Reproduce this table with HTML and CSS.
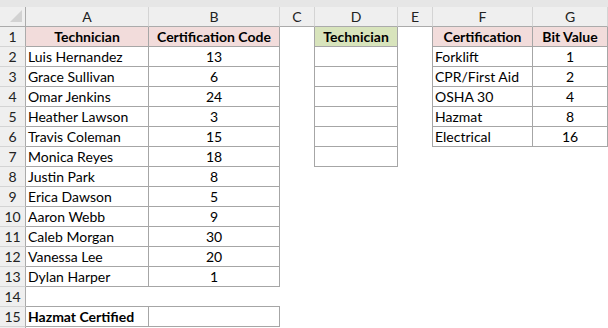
FILE: index.html
```html
<!DOCTYPE html>
<html>
<head>
<meta charset="utf-8">
<link rel="stylesheet" href="styles.css">
</head>
<body>
<div class="strip"></div>
<div class="sheet">
  <div class="corner"><svg width="12" height="12" viewBox="0 0 12 12"><polygon points="12,0 12,12 0,12" fill="#d2d2d2"/></svg></div>
  <div class="ch">A</div><div class="ch">B</div><div class="ch">C</div><div class="ch">D</div><div class="ch">E</div><div class="ch">F</div><div class="ch">G</div>

  <div class="rh">1</div>
  <div class="c x pink bold ctr">Technician</div><div class="c x pink bold ctr">Certification Code</div><div class="c br"></div><div class="c x green bold ctr">Technician</div><div class="c br"></div><div class="c x pink bold ctr">Certification</div><div class="c x pink bold ctr">Bit Value</div>

  <div class="rh">2</div>
  <div class="c x">Luis Hernandez</div><div class="c x ctr">13</div><div class="c br"></div><div class="c x"></div><div class="c br"></div><div class="c x">Forklift</div><div class="c x ctr">1</div>

  <div class="rh">3</div>
  <div class="c x">Grace Sullivan</div><div class="c x ctr">6</div><div class="c br"></div><div class="c x"></div><div class="c br"></div><div class="c x">CPR/First Aid</div><div class="c x ctr">2</div>

  <div class="rh">4</div>
  <div class="c x">Omar Jenkins</div><div class="c x ctr">24</div><div class="c br"></div><div class="c x"></div><div class="c br"></div><div class="c x">OSHA 30</div><div class="c x ctr">4</div>

  <div class="rh">5</div>
  <div class="c x">Heather Lawson</div><div class="c x ctr">3</div><div class="c br"></div><div class="c x"></div><div class="c br"></div><div class="c x">Hazmat</div><div class="c x ctr">8</div>

  <div class="rh">6</div>
  <div class="c x">Travis Coleman</div><div class="c x ctr">15</div><div class="c br"></div><div class="c x"></div><div class="c br"></div><div class="c x">Electrical</div><div class="c x ctr">16</div>

  <div class="rh">7</div>
  <div class="c x">Monica Reyes</div><div class="c x ctr">18</div><div class="c br"></div><div class="c x"></div><div class="c"></div><div class="c"></div><div class="c"></div>

  <div class="rh">8</div>
  <div class="c x">Justin Park</div><div class="c x ctr">8</div><div class="c"></div><div class="c"></div><div class="c"></div><div class="c"></div><div class="c"></div>

  <div class="rh">9</div>
  <div class="c x">Erica Dawson</div><div class="c x ctr">5</div><div class="c"></div><div class="c"></div><div class="c"></div><div class="c"></div><div class="c"></div>

  <div class="rh">10</div>
  <div class="c x">Aaron Webb</div><div class="c x ctr">9</div><div class="c"></div><div class="c"></div><div class="c"></div><div class="c"></div><div class="c"></div>

  <div class="rh">11</div>
  <div class="c x">Caleb Morgan</div><div class="c x ctr">30</div><div class="c"></div><div class="c"></div><div class="c"></div><div class="c"></div><div class="c"></div>

  <div class="rh">12</div>
  <div class="c x">Vanessa Lee</div><div class="c x ctr">20</div><div class="c"></div><div class="c"></div><div class="c"></div><div class="c"></div><div class="c"></div>

  <div class="rh">13</div>
  <div class="c x">Dylan Harper</div><div class="c x ctr">1</div><div class="c"></div><div class="c"></div><div class="c"></div><div class="c"></div><div class="c"></div>

  <div class="rh">14</div>
  <div class="c bb"></div><div class="c bb"></div><div class="c"></div><div class="c"></div><div class="c"></div><div class="c"></div><div class="c"></div>

  <div class="rh">15</div>
  <div class="c x bold">Hazmat Certified</div><div class="c x"></div><div class="c"></div><div class="c"></div><div class="c"></div><div class="c"></div><div class="c"></div>

  <div class="rh"></div>
  <div class="c"></div><div class="c"></div><div class="c"></div><div class="c"></div><div class="c"></div><div class="c"></div><div class="c"></div>
</div>
</body>
</html>
```
FILE: styles.css
```css
html, body {
  margin: 0;
  padding: 0;
  background: #ffffff;
  overflow: hidden;
}
body {
  font-family: Lato, "Liberation Sans", sans-serif;
  font-size: 14px;
  color: #000000;
}
.strip {
  height: 7px;
  background: #e6e6e6;
}
.sheet {
  display: grid;
  grid-template-columns: 26px 123px 131px 35px 83px 35px 100px 75px;
  grid-template-rows: 20px;
  grid-auto-rows: 20px;
}
.sheet > div {
  box-sizing: border-box;
}
.corner {
  background: #efefef;
  border-right: 1px solid #ababab;
  border-bottom: 1px solid #ababab;
  display: flex;
  align-items: flex-end;
  justify-content: flex-end;
  padding: 0 3px 4px 0;
}
.corner svg {
  display: block;
}
.ch {
  background: #efefef;
  border-right: 1px solid #d4d4d4;
  border-bottom: 1px solid #ababab;
  text-align: center;
  line-height: 19px;
  color: #222222;
}
.rh {
  background: #efefef;
  border-right: 1px solid #ababab;
  border-bottom: 1px solid #d4d4d4;
  text-align: center;
  line-height: 20px;
  color: #222222;
}
.c {
  line-height: 19px;
  padding-left: 2px;
  white-space: nowrap;
  overflow: hidden;
}
.x {
  border-right: 1px solid #a6a6a6;
  border-bottom: 1px solid #a6a6a6;
}
.br {
  border-right: 1px solid #a6a6a6;
}
.bb {
  border-bottom: 1px solid #a6a6a6;
}
.ctr {
  text-align: center;
  padding-left: 0;
}
.bold {
  font-weight: bold;
}
.pink {
  background: #f2dcdb;
}
.green {
  background: #d8e4bc;
}
```
